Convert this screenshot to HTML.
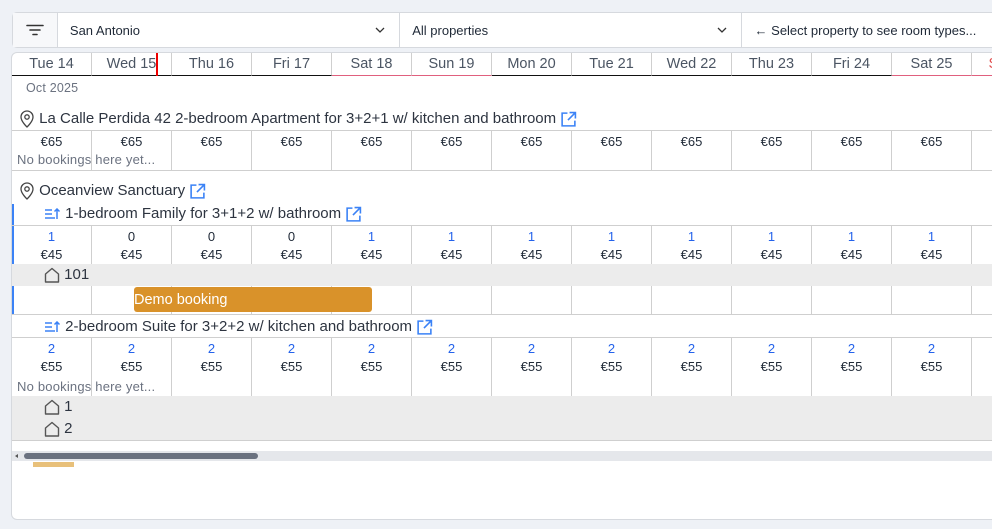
<!DOCTYPE html>
<html><head><meta charset="utf-8"><style>
*{box-sizing:border-box;margin:0;padding:0}
body{width:992px;height:529px;background:#eef1f6;font-family:"Liberation Sans",Arial,sans-serif;color:#1f2937;position:relative;overflow:hidden}
.top{position:absolute;left:12px;top:12px;width:990px;height:36px;background:#fff;border:1px solid #d6d9de;border-radius:5px;display:flex;font-size:13px}
.top>div{border-right:1px solid #d6d9de;display:flex;align-items:center}
.main{position:absolute;left:11px;top:52px;width:990px;height:468px;background:#fff;border:1px solid #d6d9de;border-radius:6px;overflow:hidden}
.row{position:absolute;left:0;display:flex;width:1100px}
.c{width:80px;flex:none;border-right:1px solid #cfcfcf;text-align:center;font-size:13px;position:relative}
.p2 .c{padding-top:2px}
.hd .c{height:23px;line-height:23px;font-size:14.5px;color:#4b5563;border-bottom:1.5px solid #111;border-right:1px solid #cfcfcf}
.hd .we{border-bottom-color:#e0607e}
.t{position:absolute;font-size:15px;color:#2d3440;white-space:nowrap}
.b{color:#2563eb}
.nb{position:absolute;font-size:13px;color:#6b7280;white-space:nowrap;letter-spacing:0.2px}
.hline{position:absolute;left:0;width:990px;height:1px;background:#cfcfcf}
.gray{position:absolute;left:0;width:990px;background:#ececec}
svg{display:inline-block;vertical-align:middle}
</style></head><body>
<div class="top">
 <div style="width:45px;justify-content:center;background:#f7f8fa"><svg width="18" height="12" viewBox="0 0 18 12"><path d="M1 1.5h16M4 6h10M7 10.5h4" stroke="#333" stroke-width="1.6" stroke-linecap="round"/></svg></div>
 <div style="width:343px;padding-left:12px;justify-content:space-between;padding-right:14px"><span>San Antonio</span><svg width="10" height="6"><path d="M1 1l4 4 4-4" fill="none" stroke="#333" stroke-width="1.3"/></svg></div>
 <div style="width:342px;padding-left:12px;justify-content:space-between;padding-right:14px"><span>All properties</span><svg width="10" height="6"><path d="M1 1l4 4 4-4" fill="none" stroke="#333" stroke-width="1.3"/></svg></div>
 <div style="width:260px;padding-left:13px;border-right:none">← Select property to see room types...</div>
</div>
<div class="main">
 <div class="row hd" style="top:0">
  <div class="c">Tue 14</div><div class="c">Wed 15</div><div class="c">Thu 16</div><div class="c">Fri 17</div><div class="c we">Sat 18</div><div class="c we">Sun 19</div><div class="c">Mon 20</div><div class="c">Tue 21</div><div class="c">Wed 22</div><div class="c">Thu 23</div><div class="c">Fri 24</div><div class="c we">Sat 25</div><div class="c we" style="color:#e05050">Sun 26</div>
 </div>
 <div style="position:absolute;left:144px;top:0;width:1.5px;height:23px;background:#e00"></div>
 <div class="nb" style="left:14px;top:28px;font-size:12.5px">Oct 2025</div>

 <div class="t" style="left:7px;top:57px"><svg width="16" height="18" viewBox="0 0 16 18"><path d="M8 17s-6-5.5-6-10a6 6 0 0112 0c0 4.5-6 10-6 10z" fill="none" stroke="#444" stroke-width="1.3"/><circle cx="8" cy="7" r="2.2" fill="none" stroke="#444" stroke-width="1.3"/></svg> La Calle Perdida 42 2-bedroom Apartment for 3+2+1 w/ kitchen and bathroom <svg width="17" height="17" viewBox="0 0 16 16"><path d="M7 2H2v12h12V9M9 1.5h5.5V7M14.5 1.5 7.5 8.5" fill="none" stroke="#3b82f6" stroke-width="1.5"/></svg></div>
 <div class="hline" style="top:77px"></div>
 <div class="row" style="top:78px;height:39px">
  <div class="c" style="padding-top:3px">€65</div><div class="c" style="padding-top:3px">€65</div><div class="c" style="padding-top:3px">€65</div><div class="c" style="padding-top:3px">€65</div><div class="c" style="padding-top:3px">€65</div><div class="c" style="padding-top:3px">€65</div><div class="c" style="padding-top:3px">€65</div><div class="c" style="padding-top:3px">€65</div><div class="c" style="padding-top:3px">€65</div><div class="c" style="padding-top:3px">€65</div><div class="c" style="padding-top:3px">€65</div><div class="c" style="padding-top:3px">€65</div><div class="c"></div>
 </div>
 <div class="nb" style="left:5px;top:99px">No bookings here yet...</div>
 <div class="hline" style="top:117px"></div>

 <div class="t" style="left:7px;top:129px"><svg width="16" height="18" viewBox="0 0 16 18"><path d="M8 17s-6-5.5-6-10a6 6 0 0112 0c0 4.5-6 10-6 10z" fill="none" stroke="#444" stroke-width="1.3"/><circle cx="8" cy="7" r="2.2" fill="none" stroke="#444" stroke-width="1.3"/></svg> Oceanview Sanctuary <svg width="17" height="17" viewBox="0 0 16 16"><path d="M7 2H2v12h12V9M9 1.5h5.5V7M14.5 1.5 7.5 8.5" fill="none" stroke="#3b82f6" stroke-width="1.5"/></svg></div>
 <div style="position:absolute;left:0;top:151px;width:2px;height:110px;background:#3b82f6"></div>
 <div class="t" style="left:33px;top:152px"><svg width="16" height="12" viewBox="0 0 16 12"><path d="M0 2h7M0 6h7M0 10h10M12 11V1M9.5 3.5 12 1l2.5 2.5" fill="none" stroke="#3b82f6" stroke-width="1.5"/></svg> 1-bedroom Family for 3+1+2 w/ bathroom <svg width="17" height="17" viewBox="0 0 16 16"><path d="M7 2H2v12h12V9M9 1.5h5.5V7M14.5 1.5 7.5 8.5" fill="none" stroke="#3b82f6" stroke-width="1.5"/></svg></div>
 <div class="hline" style="top:172px"></div>
 <div class="row p2" style="top:173px;height:38px;line-height:18px">
  <div class="c"><span class="b">1</span><br>€45</div><div class="c">0<br>€45</div><div class="c">0<br>€45</div><div class="c">0<br>€45</div><div class="c"><span class="b">1</span><br>€45</div><div class="c"><span class="b">1</span><br>€45</div><div class="c"><span class="b">1</span><br>€45</div><div class="c"><span class="b">1</span><br>€45</div><div class="c"><span class="b">1</span><br>€45</div><div class="c"><span class="b">1</span><br>€45</div><div class="c"><span class="b">1</span><br>€45</div><div class="c"><span class="b">1</span><br>€45</div><div class="c"></div>
 </div>
 <div class="gray" style="top:211px;height:22px"></div>
 <div class="t" style="left:32px;top:213px"><svg width="16" height="16" viewBox="0 0 16 16"><path d="M1.5 15V7L8 1.5 14.5 7v8z" fill="none" stroke="#555" stroke-width="1.4" stroke-linejoin="round"/></svg> 101</div>
 <div class="row" style="top:233px;height:28px">
  <div class="c"></div><div class="c"></div><div class="c"></div><div class="c"></div><div class="c"></div><div class="c"></div><div class="c"></div><div class="c"></div><div class="c"></div><div class="c"></div><div class="c"></div><div class="c"></div><div class="c"></div>
 </div>
 <div style="position:absolute;left:122px;top:234px;width:238px;height:25px;background:#d9922a;border-radius:3px;color:#fff;font-size:14.5px;line-height:27px">Demo booking</div>
 <div class="hline" style="top:261px"></div>

 <div class="t" style="left:33px;top:265px"><svg width="16" height="12" viewBox="0 0 16 12"><path d="M0 2h7M0 6h7M0 10h10M12 11V1M9.5 3.5 12 1l2.5 2.5" fill="none" stroke="#3b82f6" stroke-width="1.5"/></svg> 2-bedroom Suite for 3+2+2 w/ kitchen and bathroom <svg width="17" height="17" viewBox="0 0 16 16"><path d="M7 2H2v12h12V9M9 1.5h5.5V7M14.5 1.5 7.5 8.5" fill="none" stroke="#3b82f6" stroke-width="1.5"/></svg></div>
 <div class="hline" style="top:284px"></div>
 <div class="row p2" style="top:285px;height:58px;line-height:18px">
  <div class="c"><span class="b">2</span><br>€55</div><div class="c"><span class="b">2</span><br>€55</div><div class="c"><span class="b">2</span><br>€55</div><div class="c"><span class="b">2</span><br>€55</div><div class="c"><span class="b">2</span><br>€55</div><div class="c"><span class="b">2</span><br>€55</div><div class="c"><span class="b">2</span><br>€55</div><div class="c"><span class="b">2</span><br>€55</div><div class="c"><span class="b">2</span><br>€55</div><div class="c"><span class="b">2</span><br>€55</div><div class="c"><span class="b">2</span><br>€55</div><div class="c"><span class="b">2</span><br>€55</div><div class="c"></div>
 </div>
 <div class="nb" style="left:5px;top:326px">No bookings here yet...</div>
 <div class="gray" style="top:343px;height:44px"></div>
 <div class="t" style="left:32px;top:345px"><svg width="16" height="16" viewBox="0 0 16 16"><path d="M1.5 15V7L8 1.5 14.5 7v8z" fill="none" stroke="#555" stroke-width="1.4" stroke-linejoin="round"/></svg> 1</div>
 <div class="t" style="left:32px;top:367px"><svg width="16" height="16" viewBox="0 0 16 16"><path d="M1.5 15V7L8 1.5 14.5 7v8z" fill="none" stroke="#555" stroke-width="1.4" stroke-linejoin="round"/></svg> 2</div>
 <div class="hline" style="top:387px"></div>
 <div style="position:absolute;left:0;top:398px;width:990px;height:10px;background:#e5e7eb"></div>
 <div style="position:absolute;left:3px;top:401px;width:0;height:0;border-top:2.5px solid transparent;border-bottom:2.5px solid transparent;border-right:3px solid #555"></div>
 <div style="position:absolute;left:12px;top:400px;width:234px;height:6px;background:#6b7280;border-radius:3px"></div>
 <div style="position:absolute;left:21px;top:409px;width:41px;height:5px;background:#e8c07a"></div>
</div>
</body></html>
